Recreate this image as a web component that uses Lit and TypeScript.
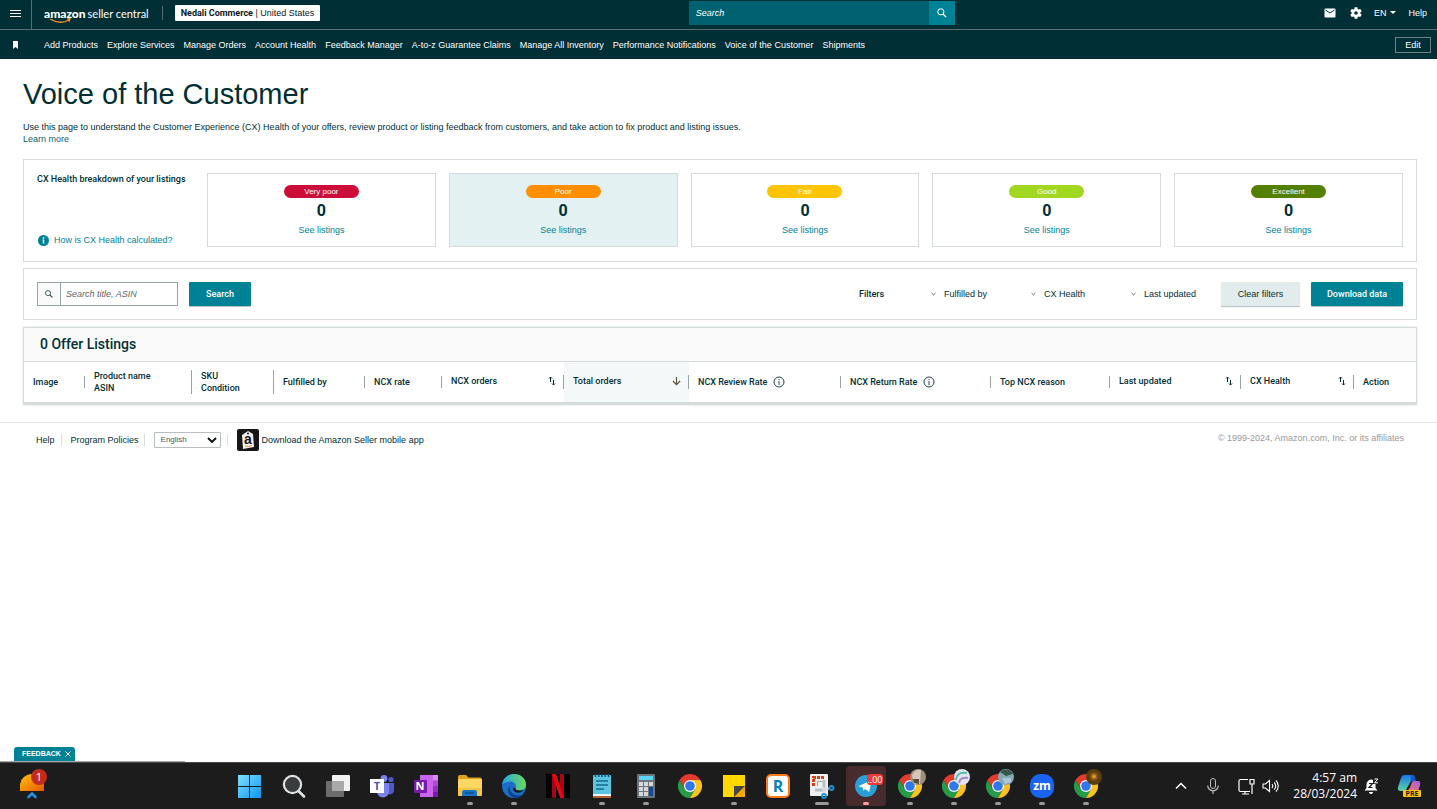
import { LitElement, html, svg, css, nothing } from "lit";
import { customElement, property, state } from "lit/decorators.js";

const NAV = [
  "Add Products", "Explore Services", "Manage Orders", "Account Health", "Feedback Manager",
  "A-to-z Guarantee Claims", "Manage All Inventory", "Performance Notifications",
  "Voice of the Customer", "Shipments",
];

const RATINGS = [
  { label: "Very poor", tone: "very-poor" },
  { label: "Poor", tone: "poor" },
  { label: "Fair", tone: "fair" },
  { label: "Good", tone: "good" },
  { label: "Excellent", tone: "excellent" },
];

type Column = { lines: string[]; weight: number; sort?: "both" | "down"; info?: boolean };
const COLUMNS: Column[] = [
  { lines: ["Image"], weight: 61 },
  { lines: ["Product name", "ASIN"], weight: 107 },
  { lines: ["SKU", "Condition"], weight: 82 },
  { lines: ["Fulfilled by"], weight: 91 },
  { lines: ["NCX rate"], weight: 77 },
  { lines: ["NCX orders"], weight: 122, sort: "both" },
  { lines: ["Total orders"], weight: 125, sort: "down" },
  { lines: ["NCX Review Rate"], weight: 152, info: true },
  { lines: ["NCX Return Rate"], weight: 150, info: true },
  { lines: ["Top NCX reason"], weight: 119 },
  { lines: ["Last updated"], weight: 131, sort: "both" },
  { lines: ["CX Health"], weight: 113, sort: "both" },
  { lines: ["Action"], weight: 62 },
];
const TOTAL = COLUMNS.reduce((sum, c) => sum + c.weight, 0);

const magnifier = html`<svg class="glyph" viewBox="0 0 12 12" width="10" height="10" aria-hidden="true">
  <circle cx="4.6" cy="4.6" r="3.7" fill="none" stroke="currentColor" stroke-width="1.2" />
  <path d="M7.2 7.2 11 11" stroke="currentColor" stroke-width="1.5" /></svg>`;

const chevron = html`<svg class="glyph" viewBox="0 0 6 4" width="5" height="4" aria-hidden="true">
  <path d="M.7.8 3 3 5.3.8" fill="none" stroke="#37474b" /></svg>`;

const sortBoth = html`<svg class="glyph" viewBox="0 0 8 10" width="8" height="10" aria-hidden="true">
  <path d="M2.500 6V1M1 2.500 2.500 1 4 2.500M5.500 4v5M4 7.500 5.500 9 7 7.500" fill="none" stroke="#002f36" /></svg>`;

const sortDown = html`<svg class="glyph" viewBox="0 0 10 10" width="9" height="10" aria-hidden="true">
  <path d="M5 .5v8.2M1 5l4 4 4-4" fill="none" stroke="#5a5340" stroke-width="1.3" /></svg>`;

const infoOutline = html`<svg class="glyph" viewBox="0 0 12 12" width="12" height="12" aria-hidden="true">
  <circle cx="6" cy="6" r="5" fill="none" stroke="#24454b" />
  <path d="M6 5v4M6 3v1.1" stroke="#24454b" /></svg>`;

const chromeBase = svg`
  <path d="M9.6 14a12 12 0 0 1 20.8 0H20l-5.2 9z" fill="#e33b2e" />
  <path d="M9.6 14 14.8 23 20 26l5.2-3L20 32A12 12 0 0 1 9.6 14z" fill="#269c48" />
  <path d="M30.4 14A12 12 0 0 1 20 32l5.2-9L20 14z" fill="#fcc31e" />
  <circle cx="20" cy="20" r="6" fill="#fff" /><circle cx="20" cy="20" r="4.8" fill="#2f77ea" />`;

type Task = { name: string; art: unknown; mark?: "dot" | "wide" | "alert" };
const TASKS: Task[] = [
  { name: "Start", art: svg`
    <defs><linearGradient id="win" x1="0" y1="0" x2="1" y2="1"><stop offset="0" stop-color="#7fe0fb" /><stop offset="1" stop-color="#0d97f4" /></linearGradient></defs>
    <path d="M8 9h11v11H8zM20 9h11v11H20zM8 21h11v11H8zM20 21h11v11H20z" fill="url(#win)" />` },
  { name: "Search", art: svg`
    <circle cx="18.500" cy="18.500" r="8.600" fill="#393c3e" stroke="#dfe3e4" stroke-width="2.200" />
    <path d="m25 25.500 5 5" stroke="#dfe3e4" stroke-width="2.600" stroke-linecap="round" />` },
  { name: "Task view", art: svg`
    <rect x="14" y="9" width="18" height="16" rx="1" fill="#f1f1f1" />
    <rect x="8" y="15" width="18" height="16" rx="1" fill="#6c6c6c" />
    <path d="M14 15h12v10H14z" fill="#a9a9a9" />` },
  { name: "Teams", art: svg`
    <circle cx="22" cy="12.500" r="3.400" fill="#7b83eb" /><circle cx="29" cy="13.500" r="2.600" fill="#5059c9" />
    <path d="M25 17h7v8a4 4 0 0 1-7 2z" fill="#5059c9" />
    <path d="M15 17h12v8.500a6 6 0 0 1-12 0z" fill="#7b83eb" />
    <rect x="8" y="13" width="14" height="14" fill="#fff" />
    <text x="15" y="24" class="tile-text" text-anchor="middle" fill="#4b53bc">T</text>` },
  { name: "OneNote", art: svg`
    <path d="M14 9h18v22H14z" fill="#ca64ea" /><path d="M27 9h5v5.500h-5z" fill="#d98bf0" /><path d="M27 14.500h5V20h-5z" fill="#ae4bd5" />
    <path d="M27 20h5v5.500h-5z" fill="#9332bf" /><path d="M27 25.500h5V31h-5z" fill="#7719aa" />
    <rect x="8" y="14" width="13" height="13" rx="1" fill="#7719aa" />
    <text x="14" y="24" class="tile-text" text-anchor="middle" fill="#fff">N</text>` },
  { name: "File Explorer", mark: "dot", art: svg`
    <path d="M8 11a2 2 0 0 1 2-2h6l2.500 2.500H30a2 2 0 0 1 2 2V20H8z" fill="#e2a21b" />
    <rect x="8" y="13" width="24" height="17" rx="1.500" fill="#fdd663" />
    <path d="M8 22h24v6.500a1.500 1.500 0 0 1-1.500 1.500h-21A1.500 1.500 0 0 1 8 28.500z" fill="#f9c440" />
    <path d="M12 30v-4a2 2 0 0 1 2-2h11a2 2 0 0 1 2 2v4z" fill="#1577c4" /><path d="M15 27h9" stroke="#0c4f8c" stroke-width="1.500" />` },
  { name: "Edge", mark: "dot", art: svg`
    <defs><linearGradient id="edge" x1="0" y1="0" x2="1" y2="0"><stop offset="0" stop-color="#2aa7e5" /><stop offset="1" stop-color="#69d95c" /></linearGradient></defs>
    <circle cx="20" cy="20" r="12" fill="#1b6fc8" />
    <path d="M8.200 18C9.500 11.500 14.500 8 20 8c7 0 12 5 12 10.500 0 4-3 6-6.500 6-3 0-4.500-1.200-4-2.500 1.500-2.500-.5-6.500-5-6.500-4 0-7 2-8.300 2.500z" fill="url(#edge)" />
    <path d="M16.500 19c-2.500 5 1.500 10.500 8 10.500 2.500 0 4.500-.8 5.700-2C28 30.500 24.500 32 21 32c-6-1-9.500-8-4.500-13z" fill="#0c4388" />
    <path d="M21.500 22c-.5 1.300 1 2.500 4 2.500 1.500 0 3-.4 4-1.200-1 2.500-3 3.400-5 3.400-3.500 0-6-2.500-5.500-5z" fill="#1b1b1b" />` },
  { name: "Netflix", art: svg`
    <path d="M8 8h24v24H8z" fill="#000" />
    <path d="M14 8h4v24l-4-.5zM22 8h4v23.500l-4 .5z" fill="#a40812" /><path d="M14 8h4l8 24-4-.3z" fill="#e50914" />` },
  { name: "Notepad", mark: "dot", art: svg`
    <rect x="11" y="9" width="18" height="22" rx="1" fill="#5cc5dd" /><path d="M11 28h18v2H11z" fill="#eef5f7" /><path d="M11 30h18v2H11z" fill="#b1622f" />
    <path d="M13.500 8v3M16.800 8v3M20 8v3M23.200 8v3M26.500 8v3" stroke="#0c4d70" stroke-width="1.400" />
    <path d="M14 15h12M14 19h12M14 23h8" stroke="#136b8d" stroke-width="1.500" />` },
  { name: "Calculator", mark: "dot", art: svg`
    <rect x="11" y="8" width="18" height="24" rx="1" fill="#6c757c" /><path d="M13 10h14v4H13z" fill="#5bd3f4" />
    <path d="M13 16h4v4h-4zM18 16h4v4h-4zM23 16h4v4h-4zM13 21h4v4h-4zM18 21h4v4h-4zM13 26h4v4h-4zM18 26h4v4h-4z" fill="#d5d9dc" />
    <path d="M23 21h4v9h-4z" fill="#124b92" />` },
  { name: "Chrome", art: chromeBase },
  { name: "Sticky Notes", mark: "dot", art: svg`
    <path d="M9 9h22v22H9z" fill="#ffd800" /><path d="M20 20h11v11H20z" fill="#f2a900" /><path d="M20 20h11L20 31z" fill="#454545" />` },
  { name: "RingCentral", art: svg`
    <rect x="9" y="9" width="22" height="22" rx="4" fill="#fff" stroke="#ff7a1a" stroke-width="2" />
    <text x="20" y="26" class="ring-text" text-anchor="middle" fill="#0a7fb8">R</text>` },
  { name: "Snipping Tool", mark: "wide", art: svg`
    <rect x="8" y="8" width="18" height="22" rx="1" fill="#eef1f3" />
    <path d="M11.500 20v-8.500H22" fill="none" stroke="#d8410f" stroke-width="3" stroke-dasharray="3 1" /><path d="M15.500 20v-4.500H22" fill="none" stroke="#9da4a8" stroke-width="1" />
    <path d="M22 14v10H13" fill="none" stroke="#b9c0c4" stroke-width="3" />
    <path d="m20 23 8-.5M21.500 21l.5 7" stroke="#d8dcde" stroke-width="2" />
    <circle cx="29.500" cy="22" r="2" fill="none" stroke="#1792dd" stroke-width="1.800" /><circle cx="22" cy="30" r="2" fill="none" stroke="#1792dd" stroke-width="1.800" />` },
  { name: "Telegram", mark: "alert", art: svg`
    <circle cx="20" cy="20" r="11" fill="#2a9fd8" />
    <path d="m12.500 20 13-5.500-2.300 11.500-4-3-2 1.800-.3-3z" fill="#fff" />
    <rect x="21" y="8" width="16" height="11" rx="3" fill="#ea3b36" />
    <text x="29" y="17" class="badge-text" text-anchor="middle" fill="#fff">..00</text>` },
  { name: "Chrome profile 1", mark: "dot", art: svg`${chromeBase}
    <circle cx="28" cy="11" r="8" fill="#a18e79" /><path d="M22 9a8 8 0 0 1 9-5l-1 14h-6z" fill="#d3c8b8" /><path d="M23 13h6v5l-5-1z" fill="#5d4a3c" />` },
  { name: "Chrome profile 2", mark: "dot", art: svg`${chromeBase}
    <circle cx="28" cy="11" r="8" fill="#e3e4ec" /><path d="M22 14q1-9 11-7" fill="none" stroke="#55bfae" stroke-width="2" /><path d="M25 17q1-6 9-5" fill="none" stroke="#a58cd4" stroke-width="2" />` },
  { name: "Chrome profile 3", mark: "dot", art: svg`${chromeBase}
    <circle cx="28" cy="11" r="8" fill="#83a9b3" /><path d="M22 6a8 8 0 0 1 13 2l-7 2z" fill="#35574a" /><path d="M24 12h9v4l-6 2z" fill="#a9c7d6" />` },
  { name: "Zoom", mark: "dot", art: svg`
    <rect x="8" y="8" width="24" height="24" rx="10" fill="#1a63f3" />
    <text x="20" y="24" class="zoom-text" text-anchor="middle" fill="#fff">zm</text>` },
  { name: "Chrome profile 4", mark: "dot", art: svg`${chromeBase}
    <circle cx="28" cy="11" r="8" fill="#5d3d10" /><circle cx="28" cy="10.500" r="4" fill="#8a5a14" /><circle cx="28" cy="10.500" r="2" fill="#d9963a" />` },
];

@customElement("sc-header")
class ScHeader extends LitElement {
  static styles = css`
    :host { display: block; background: #002f36; color: #fff; font: 9px/12px "Liberation Sans", Arial, sans-serif; }
    button, input { font: inherit; color: inherit; border: 0; margin: 0; padding: 0; background: none; }
    a { color: inherit; text-decoration: none; }
    svg { display: block; }
    .top { display: grid; grid-template-columns: 10fr 266px 7fr; height: 29px; border-bottom: 1px solid #5d6c71; }
    .left, .right { display: flex; align-items: center; }
    .right { padding-bottom: 4px; }
    .menu { box-sizing: content-box; width: 11px; height: 26px; padding: 0 10px 3px; border-right: 1px solid #5d6c71; }
    .logo { display: flex; flex-direction: column; margin: 0 13px 0 12px; }
    .words { display: flex; gap: 2px; font: 12px/15px Lato, sans-serif; }
    .words b { font-weight: 900; }
    .words span { font-size: 11px; }
    .smile { margin: -3px 0 0 5px; }
    .rule { width: 1px; height: 14px; background: #5d6c71; margin: 0 12px 3px 0; }
    .store { background: #fff; color: #0b1a1d; height: 16px; padding: 0 6px; border-radius: 1px; margin-bottom: 3px; white-space: nowrap; }
    .store b { font-family: Roboto, sans-serif; font-weight: 700; }
    .search { display: flex; height: 24px; margin-top: 1px; }
    .search input { flex: 1; min-width: 0; background: #006170; padding: 0 7px; outline: 0; }
    .search input::placeholder { color: #fff; opacity: 1; font-style: italic; }
    .search button { display: grid; place-items: center; width: 26px; background: #008296; }
    .right { justify-content: flex-end; gap: 12px; padding-right: 10px; }
    .icons { display: flex; gap: 14px; }
    .lang { display: flex; align-items: center; gap: 4px; }
    .bar { display: flex; align-items: center; height: 29px; padding: 0 6px 0 12px; }
    nav { display: flex; gap: 9px; margin-left: 25px; flex: 1; white-space: nowrap; }
    .edit { width: 36px; height: 16px; border: 1px solid #6f7f84; }
  `;
  render() {
    return html`
      <div class="top">
        <div class="left">
          <button class="menu" aria-label="Menu"><svg viewBox="0 0 11 9" width="11" height="9"><path d="M0 1.500h11M0 4.500h11M0 7.500h11" stroke="#fff" /></svg></button>
          <a class="logo" href="#" aria-label="amazon seller central">
            <span class="words"><b>amazon</b><span>seller central</span></span>
            <svg class="smile" viewBox="0 0 24 6" width="24" height="6"><path d="M1 1q10 6 19 1M18 .8l3-.1-1 3" fill="none" stroke="#f79420" stroke-width="1.300" /></svg>
          </a>
          <span class="rule"></span>
          <button class="store"><b>Nedali Commerce</b> | United States</button>
        </div>
        <form class="search" @submit=${(e: Event) => e.preventDefault()}>
          <input type="text" placeholder="Search" aria-label="Search" />
          <button aria-label="Search">${magnifier}</button>
        </form>
        <div class="right">
          <div class="icons">
            <button aria-label="Messages"><svg viewBox="0 0 12 10" width="12" height="12"><rect x=".5" y=".5" width="11" height="9" rx="1" fill="#fff" /><path d="m1.500 2 4.500 3 4.500-3" fill="none" stroke="#002f36" /></svg></button>
            <button aria-label="Settings"><svg viewBox="2 2 20 20" width="12" height="12"><path fill="#fff" fill-rule="evenodd" d="M19.140 12.940c.04-.3.06-.61.06-.94 0-.32-.02-.64-.07-.94l2.030-1.580c.18-.14.23-.41.12-.61l-1.920-3.320c-.12-.22-.37-.29-.59-.22l-2.390.96c-.5-.38-1.030-.7-1.620-.94l-.36-2.540c-.04-.24-.24-.41-.48-.41h-3.840c-.24 0-.43.17-.47.41l-.36 2.540c-.59.24-1.130.57-1.620.94l-2.390-.96c-.22-.08-.47 0-.59.22L2.740 8.870c-.12.21-.08.47.12.61l2.030 1.580c-.05.3-.09.63-.09.94s.02.64.07.94l-2.030 1.580c-.18.14-.23.41-.12.61l1.920 3.320c.12.22.37.29.59.22l2.390-.96c.5.38 1.030.7 1.620.94l.36 2.540c.05.24.24.41.48.41h3.840c.24 0 .44-.17.47-.41l.36-2.540c.59-.24 1.130-.56 1.620-.94l2.390.96c.22.08.47 0 .59-.22l1.920-3.320c.12-.22.07-.47-.12-.61zM12 15a3 3 0 1 1 0-6 3 3 0 0 1 0 6z" /></svg></button>
          </div>
          <button class="lang" aria-haspopup="listbox">EN <svg viewBox="0 0 6 3" width="6" height="3"><path d="M0 0h6L3 3z" fill="#fff" /></svg></button>
          <a href="#">Help</a>
        </div>
      </div>
      <div class="bar">
        <svg viewBox="0 0 7 8" width="7" height="8" aria-hidden="true"><path d="M1 0h5v8L3.500 6 1 8z" fill="#fff" /></svg>
        <nav aria-label="Favorites">${NAV.map((n) => html`<a href="#">${n}</a>`)}</nav>
        <button class="edit">Edit</button>
      </div>`;
  }
}

@customElement("rating-card")
class RatingCard extends LitElement {
  @property() label = "";
  @property() tone = "";
  static styles = css`
    :host { display: flex; flex-direction: column; align-items: center; box-sizing: border-box; padding: 11px 0 0; border: 1px solid #d5dbdb; background: #fff; }
    :host([selected]) { background: #e3f1f2; }
    .pill { width: 75px; border-radius: 7px; color: #fff; text-align: center; font: 8px/13px "Liberation Sans", Arial, sans-serif; }
    .very-poor { background: #cc0c39; }
    .poor { background: #ff8f00; }
    .fair { background: #ffc400; }
    .good { background: #a2d720; }
    .excellent { background: #538000; }
    .count { font: 700 16px/26px Roboto, sans-serif; color: #002f36; }
    a { color: #008296; text-decoration: none; font: 9px/12px "Liberation Sans", Arial, sans-serif; }
  `;
  render() {
    return html`<span class="pill ${this.tone}">${this.label}</span><span class="count">0</span><a href="#">See listings</a>`;
  }
}

@customElement("task-bar")
class TaskBar extends LitElement {
  static styles = css`
    :host { display: flex; align-items: flex-start; box-sizing: border-box; height: 47px; padding: 3px 16px 0 12px; background: #1c1c1c; border-top: 1px solid #4a4a4a; color: #fff; font: 12px/16px "Open Sans", sans-serif; }
    button { border: 0; padding: 0; margin: 0; background: none; color: inherit; font: inherit; border-radius: 4px; }
    button.alert { background: #472b2d; }
    svg { display: block; }
    .apps { display: flex; gap: 4px; margin-left: 178px; flex: 1; }
    .tray { display: flex; align-items: center; height: 40px; }
    .clock { text-align: right; margin: 0 7px 0 14px; }
    .net { margin: 0 6px 0 19px; }
    .mic { margin-left: 20px; }
    .copilot { margin-left: 18px; }
    .badge-text { font: 9px "Open Sans", sans-serif; }
    .tile-text { font: 700 11px "Open Sans", sans-serif; }
    .ring-text { font: 700 16px "Open Sans", sans-serif; }
    .zoom-text { font: 700 12px "Open Sans", sans-serif; }
    .count-text { font: 11px "Open Sans", sans-serif; }
    .pre-text { font: 700 7px "Open Sans", sans-serif; }
  `;
  render() {
    return html`
      <button aria-label="Weather, 1 alert"><svg viewBox="0 0 40 40" width="40" height="40">
        <defs><linearGradient id="sun" x1="0" y1="0" x2="1" y2="1"><stop offset="0" stop-color="#ffc20e" /><stop offset="1" stop-color="#e65a00" /></linearGradient></defs>
        <path d="M8 25v-5a12 12 0 0 1 24 0v5z" fill="url(#sun)" />
        <path d="m16.500 31 3.500-3.500 3.500 3.500" fill="none" stroke="#1f96e0" stroke-width="2.600" stroke-linecap="round" />
        <circle cx="27" cy="11" r="8" fill="#c42b1c" /><text x="27" y="15" class="count-text" text-anchor="middle" fill="#fff">1</text></svg></button>
      <div class="apps">${TASKS.map((t) => html`
        <button class=${t.mark ?? ""} aria-label=${t.name}><svg viewBox="0 0 40 40" width="40" height="40">
          ${t.art}
          ${t.mark ? svg`<rect x=${t.mark === "wide" ? 13 : 17} y="36" width=${t.mark === "wide" ? 14 : 6} height="3" rx="1.500" fill=${t.mark === "alert" ? "#ff9ba3" : "#9a9a9a"} />` : nothing}
        </svg></button>`)}</div>
      <div class="tray">
        <button aria-label="Hidden icons"><svg viewBox="0 0 12 8" width="12" height="8"><path d="m1 6.500 5-5 5 5" fill="none" stroke="#fff" stroke-width="1.500" /></svg></button>
        <button class="mic" aria-label="Microphone"><svg viewBox="0 0 12 16" width="12" height="16"><rect x="3.500" y=".5" width="5" height="10" rx="2.500" fill="none" stroke="#bdbdbd" /><path d="M.7 7.500a5.300 5.300 0 0 0 10.600 0M6 13v3" fill="none" stroke="#bdbdbd" stroke-width="1.200" /></svg></button>
        <button class="net" aria-label="Network"><svg viewBox="0 0 18 17" width="18" height="17"><path d="M10 1.500H2.500a1.500 1.500 0 0 0-1.500 1.500v9A1.500 1.500 0 0 0 2.500 13.500H12M7 13.500v2.500M4 16h7M14 6v10M12 1.500h4V6h-4z" fill="none" stroke="#fff" stroke-width="1.200" /></svg></button>
        <button aria-label="Volume"><svg viewBox="0 0 17 14" width="17" height="14"><path d="M1 5h2.500L7.500 1.500v11L3.500 9H1zM10 5q1.500 2 0 4M12.200 3.300q3 3.700 0 7.400M14 1.300q4.500 5.700 0 11.400" fill="none" stroke="#fff" stroke-width="1.100" /></svg></button>
        <div class="clock"><div>4:57 am</div><div>28/03/2024</div></div>
        <button aria-label="Notifications"><svg viewBox="0 0 15 16" width="15" height="16">
          <path d="M7.500 1.500a5 5 0 0 0-5 5V10L.5 12.500h13L11.500 10V6.500a4.500 4.500 0 0 0-4-5z" fill="#fff" /><path d="M5 14h4a2 2 0 0 1-4 0z" fill="#fff" />
          <path d="M5 5.500h3.500L5 9.500h3.500" fill="none" stroke="#1c1c1c" stroke-width="1.200" />
          <rect x="9" width="6" height="6" fill="#1c1c1c" /><path d="M10.500 1H14l-3.500 3.800H14" fill="none" stroke="#fff" /></svg></button>
        <button class="copilot" aria-label="Copilot"><svg viewBox="0 0 24 24" width="24" height="24">
          <defs><linearGradient id="cpa" x1="0" y1="0" x2="0" y2="1"><stop offset="0" stop-color="#1779e8" /><stop offset="1" stop-color="#5fd2a0" /></linearGradient>
          <linearGradient id="cpb" x1="1" y1="0" x2="0" y2="1"><stop offset="0" stop-color="#a35bf0" /><stop offset="1" stop-color="#ff7a52" /></linearGradient></defs>
          <path d="M7 1h8a3 3 0 0 1 3 3l-1 3h-3l-4 7q-1 3-3 3H4q-4 0-3-4L4 4q1-3 3-3z" fill="url(#cpa)" />
          <path d="m14 1 2 0q1 0 2 3l1 3h-3q-2 0-2.500 2z" fill="#1d55c4" />
          <path d="M17 7h4q3 0 2 4l-2 7H9l3-3q1-1 2-4 1-4 3-4z" fill="url(#cpb)" />
          <rect x="6" y="16" width="18" height="7" rx="1" fill="#ffc20e" /><text x="15" y="22" class="pre-text" text-anchor="middle" fill="#222">PRE</text></svg></button>
      </div>`;
  }
}

@customElement("app-root")
class AppRoot extends LitElement {
  @state() private query = "";
  static styles = css`
    :host { display: flex; flex-direction: column; min-height: 100vh; background: #fff; color: #002f36; font: 9px/12px "Liberation Sans", Arial, sans-serif; }
    button, input, select { font: inherit; color: inherit; border: 0; margin: 0; padding: 0; background: none; }
    a { color: #008296; text-decoration: none; }
    svg { display: block; flex: none; }
    main { padding: 15px 20px 17px 23px; }
    h1 { font-size: 29px; line-height: 40px; font-weight: 400; margin: 0 0 7px; }
    p { margin: 0; }
    .intro { margin-bottom: 14px; }
    .intro a { color: #11616c; }
    .medium { font-family: Roboto, sans-serif; font-weight: 500; }
    .panel { border: 1px solid #d5dbdb; padding: 13px; }
    .health { display: grid; grid-template-columns: 157px 1fr; gap: 13px; padding-bottom: 14px; margin-bottom: 6px; }
    .about { display: flex; flex-direction: column; justify-content: space-between; }
    .about h2 { margin: 0; font-size: 9px; line-height: 12px; white-space: nowrap; }
    .about a { display: flex; align-items: center; gap: 5px; margin-left: 1px; line-height: 14px; }
    .cards { display: grid; grid-template-columns: repeat(5, 1fr); gap: 13px; height: 74px; }
    .filters { display: flex; align-items: center; height: 24px; margin-bottom: 7px; }
    .find { display: flex; height: 24px; }
    .find label { display: grid; place-items: center; width: 23px; background: #fafafa; border: 1px solid #95a5a6; border-right: 0; box-sizing: border-box; }
    .find input { width: 118px; box-sizing: border-box; border: 1px solid #95a5a6; padding: 0 5px; }
    .find input::placeholder { color: #5b6567; opacity: 1; font-style: italic; }
    .btn { height: 24px; border-radius: 1px; box-shadow: 0 1px 1px #b4bcbe; }
    .primary { background: #008296; color: #fff; }
    .go { width: 62px; margin-left: 11px; }
    .tools { display: flex; align-items: center; margin-left: auto; }
    .tools .title { width: 72px; }
    .pick { display: flex; align-items: center; gap: 8px; width: 100px; }
    .pick select { appearance: none; width: 72px; }
    .clear { width: 79px; margin: 0 11px 0 -10px; background: #e3eced; }
    .save { width: 92px; }
    .listing { border: 1px solid #d5dbdb; border-bottom: 3px solid #d5dbdb; box-shadow: 0 0 2px #d5dbdb; }
    .listing h2 { margin: 0; padding: 0 16px; background: #fafafa; border-bottom: 1px solid #d5dbdb; font-size: 14px; line-height: 33px; }
    table { width: 100%; table-layout: fixed; border-collapse: collapse; }
    th { padding: 0; height: 40px; text-align: left; vertical-align: middle; }
    th.sorted { background: #f4f8f9; }
    .cell { display: flex; align-items: center; justify-content: space-between; padding: 0 7px 0 9px; border-right: 1px solid #95a5a6; white-space: nowrap; }
    .sortable { padding-bottom: 2px; }
    .info { justify-content: flex-start; gap: 6px; }
    th:last-child .cell { border-right: 0; }
    footer { display: flex; align-items: center; border-top: 1px solid #e3e6e6; padding: 6px 33px 0 36px; }
    footer a { color: #002f36; }
    .sep { width: 1px; height: 12px; background: #d9dddd; }
    .help { margin-right: 6px; }
    .policies { margin: 0 5px 0 9px; }
    .lang { display: grid; align-items: center; margin: 0 6px 0 9px; width: 67px; }
    .lang select, .lang svg { grid-area: 1 / 1; }
    .lang select { appearance: none; height: 16px; width: 100%; border: 1px solid #b9bfc0; border-radius: 1px; padding: 0 6px; font-size: 8px; color: #4c5759; }
    .lang svg { justify-self: end; margin-right: 4px; pointer-events: none; }
    .app { display: flex; align-items: center; gap: 3px; margin-left: 9px; }
    .legal { margin-left: auto; color: #999; align-self: flex-start; margin-top: 3px; }
    .logo-text { font: 700 14px "Liberation Sans", Arial, sans-serif; }
    .feedback { align-self: flex-start; display: flex; align-items: center; gap: 4px; margin: auto 0 0 14px; height: 14px; padding: 0 4px 0 8px; background: #008296; color: #fff; border-radius: 3px 3px 0 0; font-size: 7px; font-weight: 700; }
    .status { width: 185px; height: 1px; background: #a5a5a5; }
  `;
  render() {
    return html`
      <sc-header></sc-header>
      <main>
        <h1>Voice of the Customer</h1>
        <p class="intro">Use this page to understand the Customer Experience (CX) Health of your offers, review product or listing feedback from customers, and take action to fix product and listing issues.<br /><a href="#">Learn more</a></p>
        <section class="panel health">
          <div class="about">
            <h2 class="medium">CX Health breakdown of your listings</h2>
            <a href="#"><svg viewBox="0 0 11 11" width="11" height="11" aria-hidden="true"><circle cx="5.500" cy="5.500" r="5.500" fill="#008296" /><path d="M5.500 4.500v4M5.500 2.300v1.400" stroke="#fff" stroke-width="1.500" /></svg>How is CX Health calculated?</a>
          </div>
          <div class="cards">${RATINGS.map((r) => html`<rating-card label=${r.label} tone=${r.tone} ?selected=${r.tone === "poor"}></rating-card>`)}</div>
        </section>
        <section class="panel filters">
          <form class="find" @submit=${(e: Event) => e.preventDefault()}>
            <label for="find"><svg viewBox="0 0 12 12" width="8" height="8" aria-label="Search listings"><circle cx="4.600" cy="4.600" r="3.800" fill="none" stroke="#24454b" stroke-width="1.300" /><path d="m7.200 7.200 4 4" stroke="#24454b" stroke-width="1.600" /></svg></label>
            <input id="find" type="text" placeholder="Search title, ASIN" .value=${this.query} @input=${(e: Event) => (this.query = (e.target as HTMLInputElement).value)} />
            <button class="btn primary medium go">Search</button>
          </form>
          <div class="tools">
            <span class="title medium">Filters</span>
            ${["Fulfilled by", "CX Health", "Last updated"].map((f) => html`<label class="pick">${chevron}<select aria-label=${f}><option>${f}</option></select></label>`)}
            <button class="btn clear">Clear filters</button>
            <button class="btn primary medium save">Download data</button>
          </div>
        </section>
        <section class="listing">
          <h2 class="medium">0 Offer Listings</h2>
          <table>
            <colgroup>${COLUMNS.map((c) => html`<col style="width:${(c.weight / TOTAL) * 100}%" />`)}</colgroup>
            <thead><tr>${COLUMNS.map((c) => html`
              <th scope="col" class="medium ${c.sort === "down" ? "sorted" : ""}">
                <div class="cell ${c.sort ? "sortable" : ""} ${c.info ? "info" : ""}">
                  <span>${c.lines[0]}${c.lines[1] ? html`<br />${c.lines[1]}` : nothing}</span>
                  ${c.sort === "both" ? sortBoth : c.sort === "down" ? sortDown : c.info ? infoOutline : nothing}
                </div>
              </th>`)}</tr></thead>
          </table>
        </section>
      </main>
      <footer>
        <a class="help" href="#">Help</a><span class="sep"></span>
        <a class="policies" href="#">Program Policies</a><span class="sep"></span>
        <label class="lang"><select aria-label="Language"><option>English</option></select>
          <svg viewBox="0 0 10 6" width="10" height="6" aria-hidden="true"><path d="m1 1 4 4 4-4" fill="none" stroke="#111" stroke-width="2" /></svg></label>
        <span class="sep"></span>
        <a class="app" href="#"><svg viewBox="0 0 22 22" width="22" height="22" aria-hidden="true">
          <rect width="22" height="22" rx="2" fill="#161616" /><path d="m5 6 6-4 5 3 1 13-11 2z" fill="#f3f1ec" /><circle cx="11" cy="4.500" r="1" fill="#161616" />
          <text x="11" y="15" class="logo-text" text-anchor="middle" fill="#161616">a</text><path d="M8 17q4 1.500 7-.7" fill="none" stroke="#f79420" /></svg>Download the Amazon Seller mobile app</a>
        <span class="legal">© 1999-2024, Amazon.com, Inc. or its affiliates</span>
      </footer>
      <button class="feedback">FEEDBACK <svg viewBox="0 0 6 6" width="6" height="6" aria-hidden="true"><path d="m.5.5 5 5m0-5-5 5" stroke="#fff" /></svg></button>
      <div class="status"></div>
      <task-bar></task-bar>`;
  }
}
